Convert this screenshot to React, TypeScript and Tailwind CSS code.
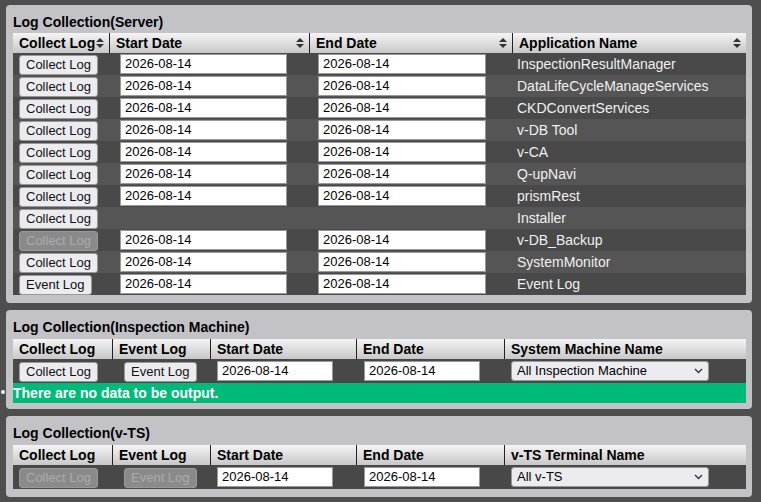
import React from "react";

const apps: [string, string, boolean][] = [
  ["Collect Log", "InspectionResultManager", true],
  ["Collect Log", "DataLifeCycleManageServices", true],
  ["Collect Log", "CKDConvertServices", true],
  ["Collect Log", "v-DB Tool", true],
  ["Collect Log", "v-CA", true],
  ["Collect Log", "Q-upNavi", true],
  ["Collect Log", "prismRest", true],
  ["Collect Log", "Installer", false],
  ["Collect Log*", "v-DB_Backup", true],
  ["Collect Log", "SystemMonitor", true],
  ["Event Log", "Event Log", true],
];

const Sort = () => (
  <svg width="8" height="10" viewBox="0 0 8 10" className="shrink-0">
    <path d="M4 0L8 4H0Z M4 10L0 6H8Z" fill="#333" />
  </svg>
);

const Btn = ({ label, disabled }: { label: string; disabled?: boolean }) => (
  <div
    className={`inline-flex h-[20px] px-[6px] rounded-[3px] border border-[#999] items-center text-[13px] leading-none whitespace-nowrap ${
      disabled ? "bg-[#8a8a8a] text-[#aaa]" : "bg-[#ebebf0] text-[#111]"
    }`}
  >
    {label}
  </div>
);

const DateBox = ({ w }: { w: number }) => (
  <div
    className="h-[20px] bg-white border border-[#999] flex items-center px-[4px] text-[13px] text-black"
    style={{ width: w }}
  >
    2026-08-14
  </div>
);

const Head = ({ w, label, sort, last }: { w: number; label: string; sort?: boolean; last?: boolean }) => (
  <div
    className={`h-full flex items-center justify-between pl-[6px] pr-[5px] text-[14px] font-bold text-black whitespace-nowrap ${last ? "" : "border-r border-[#222]"}`}
    style={{ width: w }}
  >
    <span>{label}</span>
    {sort && <Sort />}
  </div>
);

const Select = ({ label }: { label: string }) => (
  <div className="w-[198px] h-[20px] bg-[#ebebf0] rounded-[3px] border border-[#999] flex items-center justify-between px-[5px] text-[13px] text-black">
    <span>{label}</span>
    <svg width="9" height="6" viewBox="0 0 9 6"><path d="M1 1L4.5 4.5L8 1" stroke="#333" strokeWidth="1.3" fill="none" /></svg>
  </div>
);

const headerCls = "h-[20px] flex bg-gradient-to-b from-[#f4f4f4] to-[#c8c8c8]";
const font = { fontFamily: "'Liberation Sans', Arial, sans-serif" };

export default function App() {
  return (
    <div className="w-[761px] h-[502px] bg-[#4e4e4e] pt-[5px] pl-[6px] flex flex-col gap-[7px]" style={font}>
      <div className="w-[746px] bg-[#c3c3c7] rounded-[4px] pl-[7px] pt-[6px] pb-[8px]">
        <div className="text-[14px] font-bold text-black h-[22px] flex items-center">Log Collection(Server)</div>
        <div className="w-[733px] bg-[#484848]">
          <div className={headerCls}>
            <Head w={97} label="Collect Log" sort />
            <Head w={200} label="Start Date" sort />
            <Head w={203} label="End Date" sort />
            <Head w={233} label="Application Name" sort last />
          </div>
          {apps.map(([b, name, dates], i) => (
            <div key={i} className={`h-[22px] flex items-center ${i % 2 ? "bg-[#555555]" : "bg-[#494949]"}`}>
              <div className="w-[97px] pl-[6px]"><Btn label={b.replace("*", "")} disabled={b.endsWith("*")} /></div>
              <div className="w-[200px] pl-[10px]">{dates && <DateBox w={167} />}</div>
              <div className="w-[203px] pl-[8px]">{dates && <DateBox w={168} />}</div>
              <div className="w-[233px] pl-[4px] text-[14px] text-[#f0f0f0]">{name}</div>
            </div>
          ))}
        </div>
      </div>

      <div className="w-[746px] bg-[#c3c3c7] rounded-[4px] pl-[7px] pt-[6px] pb-[6px] relative">
        <div className="text-[14px] font-bold text-black h-[23px] flex items-center">Log Collection(Inspection Machine)</div>
        <div className="w-[733px] bg-[#484848]">
          <div className={headerCls}>
            <Head w={100} label="Collect Log" />
            <Head w={98} label="Event Log" />
            <Head w={146} label="Start Date" />
            <Head w={148} label="End Date" />
            <Head w={241} label="System Machine Name" last />
          </div>
          <div className="h-[24px] flex items-center">
            <div className="w-[100px] pl-[6px]"><Btn label="Collect Log" /></div>
            <div className="w-[98px] pl-[11px]"><Btn label="Event Log" /></div>
            <div className="w-[146px] pl-[6px]"><DateBox w={116} /></div>
            <div className="w-[148px] pl-[7px]"><DateBox w={116} /></div>
            <div className="w-[241px] pl-[6px]"><Select label="All Inspection Machine" /></div>
          </div>
          <div className="h-[20px] bg-[#00ba7a] text-white font-bold text-[14px] flex items-center">There are no data to be output.</div>
        </div>
        <div className="absolute left-[-5px] top-[80px] w-[4px] h-[4px] rounded-full bg-white" />
      </div>

      <div className="w-[746px] bg-[#c3c3c7] rounded-[4px] pl-[7px] pt-[6px] pb-[8px]">
        <div className="text-[14px] font-bold text-black h-[23px] flex items-center">Log Collection(v-TS)</div>
        <div className="w-[733px] bg-[#484848]">
          <div className={headerCls}>
            <Head w={100} label="Collect Log" />
            <Head w={98} label="Event Log" />
            <Head w={146} label="Start Date" />
            <Head w={148} label="End Date" />
            <Head w={241} label="v-TS Terminal Name" last />
          </div>
          <div className="h-[24px] flex items-center">
            <div className="w-[100px] pl-[6px]"><Btn label="Collect Log" disabled /></div>
            <div className="w-[98px] pl-[11px]"><Btn label="Event Log" disabled /></div>
            <div className="w-[146px] pl-[6px]"><DateBox w={116} /></div>
            <div className="w-[148px] pl-[7px]"><DateBox w={116} /></div>
            <div className="w-[241px] pl-[6px]"><Select label="All v-TS" /></div>
          </div>
        </div>
      </div>
    </div>
  );
}
